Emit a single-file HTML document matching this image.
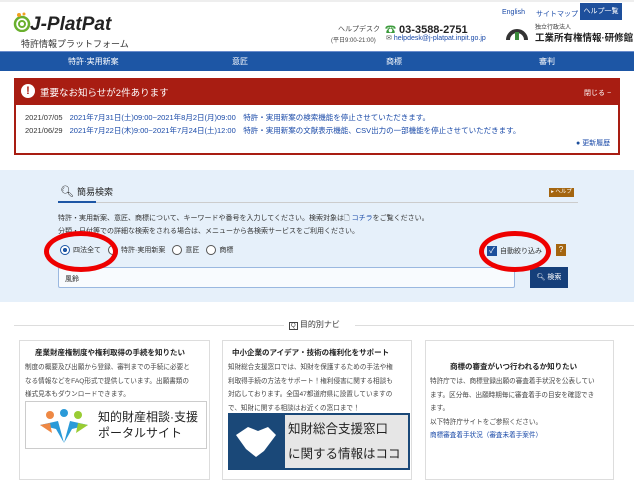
<!DOCTYPE html>
<html><head><meta charset="utf-8"><style>
*{margin:0;padding:0;box-sizing:border-box}
body{width:634px;height:473px;overflow:hidden;background:#fff;font-family:"Liberation Sans","Noto Sans CJK JP",sans-serif;color:#333;position:relative}
.a{position:absolute;white-space:nowrap}
a{color:#1a4aa8}
.ct{font-size:6.6px;line-height:13.5px;color:#444}
</style></head><body>
<div class="a" style="left:0;top:0;width:634px;height:2px;background:#eee"></div>
<!-- logo -->
<svg class="a" style="left:12px;top:12px" width="28" height="20"><circle cx="10" cy="12" r="7" fill="none" stroke="#6ab02e" stroke-width="2.5"/><circle cx="10" cy="12" r="3" fill="none" stroke="#6ab02e" stroke-width="2"/><circle cx="7" cy="3" r="2" fill="#f0a020"/><circle cx="12" cy="2" r="1.5" fill="#f0a020"/></svg>
<div class="a" style="left:30px;top:14px;font-size:19px;font-weight:bold;font-style:italic;color:#222">J-PlatPat</div>
<div class="a" style="left:21px;top:37px;font-size:9px;color:#333">特許情報プラットフォーム</div>
<div class="a" style="left:338px;top:24px;font-size:7px;color:#444">ヘルプデスク</div>
<div class="a" style="left:331px;top:35px;font-size:6px;color:#444">(平日9:00-21:00)</div>
<div class="a" style="left:385px;top:21px;font-size:11px;font-weight:bold;color:#222"><span style="color:#3a9a3a">☎</span> 03-3588-2751</div>
<div class="a" style="left:386px;top:34px;font-size:7px"><span style="color:#555">✉</span> <a>helpdesk@j-platpat.inpit.go.jp</a></div>
<div class="a" style="left:502px;top:9px;font-size:7px"><a>English</a></div>
<div class="a" style="left:536px;top:9px;font-size:7px"><a>サイトマップ</a></div>
<div class="a" style="left:580px;top:3px;width:42px;height:17px;background:#1d4f9c;color:#fff;font-size:7px;text-align:center;line-height:17px">ヘルプ一覧</div>
<svg class="a" style="left:505px;top:22px" width="24" height="20"><path d="M3 18 A9 9 0 0 1 21 18" fill="none" stroke="#333" stroke-width="4"/><rect x="10" y="10" width="4" height="8" fill="#3a8a3a"/></svg>
<div class="a" style="left:535px;top:22px;font-size:6px;color:#333">独立行政法人</div>
<div class="a" style="left:535px;top:30px;font-size:9.5px;font-weight:bold;color:#222">工業所有権情報·研修館</div>
<!-- nav -->
<div class="a" style="left:0;top:51px;width:634px;height:20px;background:#1d56a5;border-top:1px solid #6a8ccc"></div>
<div class="a" style="left:68px;top:56px;font-size:8px;color:#fff">特許·実用新案</div>
<div class="a" style="left:232px;top:56px;font-size:8px;color:#fff">意匠</div>
<div class="a" style="left:386px;top:56px;font-size:8px;color:#fff">商標</div>
<div class="a" style="left:539px;top:56px;font-size:8px;color:#fff">審判</div>
<!-- notice -->
<div class="a" style="left:14px;top:78px;width:606px;height:77px;border:2px solid #a81d12;background:#fff"></div>
<div class="a" style="left:14px;top:78px;width:606px;height:27px;background:#a81d12"></div>
<div class="a" style="left:21px;top:84px;width:14px;height:14px;border-radius:50%;background:#fff;color:#a81d12;font-weight:bold;font-size:11px;text-align:center;line-height:14px">!</div>
<div class="a" style="left:40px;top:85px;font-size:9.5px;color:#fff">重要なお知らせが2件あります</div>
<div class="a" style="left:584px;top:88px;font-size:7px;color:#fff">閉じる −</div>
<div class="a" style="left:25px;top:112px;font-size:7.5px;color:#333">2021/07/05 <a style="margin-left:5px">2021年7月31日(土)09:00~2021年8月2日(月)09:00　特許・実用新案の検索機能を停止させていただきます。</a></div>
<div class="a" style="left:25px;top:125px;font-size:7.5px;color:#333">2021/06/29 <a style="margin-left:5px">2021年7月22日(木)9:00~2021年7月24日(土)12:00　特許・実用新案の文献表示機能、CSV出力の一部機能を停止させていただきます。</a></div>
<div class="a" style="left:576px;top:138px;font-size:7px"><span style="color:#1d4f9c">●</span> <a>更新履歴</a></div>
<!-- search -->
<div class="a" style="left:0;top:170px;width:634px;height:132px;background:#e6f0fa"></div>
<div class="a" style="left:60px;top:185px;font-size:11px;color:#222">🔍︎ <span style="font-size:9px">簡易検索</span></div>
<div class="a" style="left:58px;top:202px;width:520px;height:1px;background:#ccc"></div>
<div class="a" style="left:58px;top:201px;width:38px;height:2px;background:#1d56a5"></div>
<div class="a" style="left:549px;top:188px;width:25px;height:9px;background:#a4650f;color:#fff;font-size:5.5px;line-height:9px;text-align:center">▸ ヘルプ</div>
<div class="a" style="left:58px;top:213px;font-size:7px;color:#333">特許・実用新案、意匠、商標について、キーワードや番号を入力してください。検索対象は🗋 <a>コチラ</a>をご覧ください。</div>
<div class="a" style="left:58px;top:226px;font-size:7px;color:#333">分類・日付等での詳細な検索をされる場合は、メニューから各検索サービスをご利用ください。</div>
<div class="a" style="left:60px;top:245px;font-size:7px;color:#333;display:flex;align-items:center;gap:3px">
<span style="width:10px;height:10px;border:1px solid #1d56a5;border-radius:50%;display:inline-block;background:radial-gradient(#1d56a5 35%,#fff 40%)"></span>四法全て
<span style="width:10px;height:10px;border:1px solid #555;border-radius:50%;display:inline-block;background:#fff;margin-left:4px"></span>特許·実用新案
<span style="width:10px;height:10px;border:1px solid #555;border-radius:50%;display:inline-block;background:#fff;margin-left:4px"></span>意匠
<span style="width:10px;height:10px;border:1px solid #555;border-radius:50%;display:inline-block;background:#fff;margin-left:4px"></span>商標</div>
<div class="a" style="left:487px;top:246px;width:10px;height:10px;background:#1d4f9c;color:#fff;font-size:8px;line-height:10px;text-align:center">✓</div>
<div class="a" style="left:500px;top:246px;font-size:7px;color:#333">自動絞り込み</div>
<div class="a" style="left:556px;top:244px;width:10px;height:12px;background:#a4650f;color:#fff;font-size:8px;line-height:12px;text-align:center">?</div>
<div class="a" style="left:58px;top:267px;width:457px;height:21px;background:#f8fbfe;border:1px solid #9ab8e0;border-radius:2px;font-size:7px;padding:6px 6px;color:#222">風鈴</div>
<div class="a" style="left:530px;top:267px;width:38px;height:21px;background:#153f7a;color:#fff;font-size:7px;line-height:21px;text-align:center">🔍︎ 検索</div>
<div class="a" style="left:44px;top:231px;width:74px;height:41px;border:5px solid #e00;border-radius:50%"></div>
<div class="a" style="left:479px;top:231px;width:72px;height:41px;border:5px solid #e00;border-radius:50%"></div>
<!-- navi -->
<div class="a" style="left:14px;top:325px;width:270px;height:1px;background:#ddd"></div>
<div class="a" style="left:355px;top:325px;width:280px;height:1px;background:#ddd"></div>
<div class="a" style="left:289px;top:319px;font-size:8px;color:#333"><span style="border:1px solid #444;font-size:6px;padding:0 1px">Q</span> 目的別ナビ</div>
<div class="a" style="left:19px;top:340px;width:191px;height:140px;border:1px solid #ddd"></div>
<div class="a" style="left:222px;top:340px;width:190px;height:140px;border:1px solid #ddd"></div>
<div class="a" style="left:425px;top:340px;width:189px;height:140px;border:1px solid #ddd"></div>
<div class="a" style="left:35px;top:347px;font-size:7.5px;font-weight:bold;color:#222">産業財産権制度や権利取得の手続を知りたい</div>
<div class="a ct" style="left:25px;top:361px">制度の概要及び出願から登録、審判までの手続に必要と<br>なる情報などをFAQ形式で提供しています。出願書類の<br>様式見本もダウンロードできます。</div>
<div class="a" style="left:25px;top:401px;width:182px;height:48px;border:1px solid #ccc;background:#fff"></div>
<svg class="a" style="left:38px;top:407px" width="52" height="38"><circle cx="12" cy="8" r="4" fill="#e84"/><circle cx="26" cy="6" r="4" fill="#2a9ad8"/><circle cx="40" cy="8" r="4" fill="#9c3"/><path d="M2 18 L20 14 L26 36 L32 14 L50 18 L34 22 L26 36 L18 22Z" fill="#2a9ad8"/><path d="M2 18 L14 26 L12 16Z" fill="#e84"/><path d="M50 18 L38 26 L40 16Z" fill="#9c3"/></svg>
<div class="a" style="left:98px;top:409px;font-size:12px;color:#222;line-height:16px">知的財産相談·支援<br>ポータルサイト</div>
<div class="a" style="left:232px;top:347px;font-size:7.5px;font-weight:bold;color:#222">中小企業のアイデア・技術の権利化をサポート</div>
<div class="a ct" style="left:228px;top:361px">知財総合支援窓口では、知財を保護するための手法や権<br>利取得手続の方法をサポート！権利侵害に関する相談も<br>対応しております。全国47都道府県に設置していますの<br>で、知財に関する相談はお近くの窓口まで！</div>
<div class="a" style="left:228px;top:413px;width:182px;height:57px;background:#1a4878"></div>
<div class="a" style="left:285px;top:415px;width:123px;height:53px;background:#e6e6e6"></div>
<svg class="a" style="left:234px;top:421px" width="44" height="40"><path d="M2 14 L14 6 L24 10 L34 6 L42 14 L30 30 L22 36 L12 28Z" fill="#fff"/></svg>
<div class="a" style="left:288px;top:417px;font-size:12.5px;color:#222;line-height:25px">知財総合支援窓口<br>に関する情報はココ</div>
<div class="a" style="left:450px;top:361px;font-size:7.5px;font-weight:bold;color:#222">商標の審査がいつ行われるか知りたい</div>
<div class="a ct" style="left:430px;top:375px">特許庁では、商標登録出願の審査着手状況を公表してい<br>ます。区分毎、出願時期毎に審査着手の目安を確認でき<br>ます。<br>以下特許庁サイトをご参照ください。<br><a>商標審査着手状況（審査未着手案件）</a></div>
</body></html>
